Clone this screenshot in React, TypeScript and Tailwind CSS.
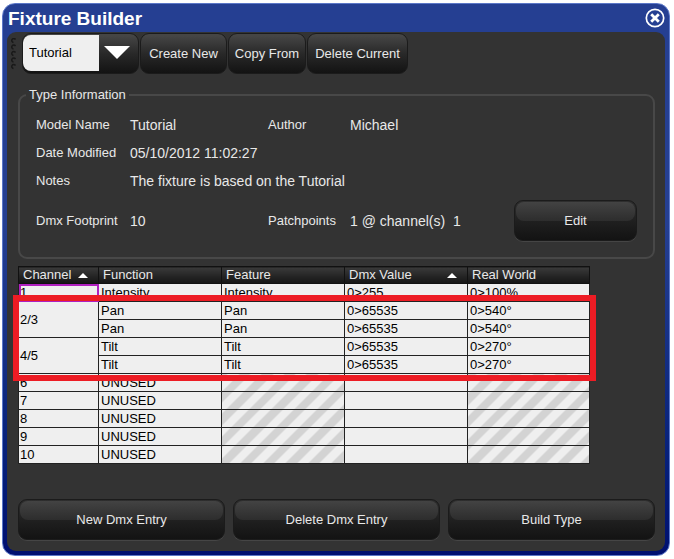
import { useState } from "react";
import clsx from "clsx";

type Entry = {
  channel?: string;
  span?: number;
  fn: string;
  feature?: string;
  dmx?: string;
  real?: string;
};

const entries: Entry[] = [
  { channel: "1", fn: "Intensity", feature: "Intensity", dmx: "0>255", real: "0>100%" },
  { channel: "2/3", span: 2, fn: "Pan", feature: "Pan", dmx: "0>65535", real: "0>540°" },
  { fn: "Pan", feature: "Pan", dmx: "0>65535", real: "0>540°" },
  { channel: "4/5", span: 2, fn: "Tilt", feature: "Tilt", dmx: "0>65535", real: "0>270°" },
  { fn: "Tilt", feature: "Tilt", dmx: "0>65535", real: "0>270°" },
  { channel: "6", fn: "UNUSED" },
  { channel: "7", fn: "UNUSED" },
  { channel: "8", fn: "UNUSED" },
  { channel: "9", fn: "UNUSED" },
  { channel: "10", fn: "UNUSED" },
];

const columns = [
  { label: "Channel", sorted: true, width: "w-[80px]" },
  { label: "Function", sorted: false, width: "w-[123px]" },
  { label: "Feature", sorted: false, width: "w-[123px]" },
  { label: "Dmx Value", sorted: true, width: "w-[123px]" },
  { label: "Real World", sorted: false, width: "w-[122px]" },
];

const buttonLook =
  "h-[41px] rounded-[9px] border border-[#1b1b1b] bg-linear-to-b from-[#454545] from-5% via-[#292929] via-50% to-[#131313] text-[#e8e8e8]";

function Button({ label, className }: { label: string; className?: string }) {
  return (
    <button type="button" className={clsx(buttonLook, "whitespace-nowrap", className)}>
      {label}
    </button>
  );
}

function BigButton({ label, className }: { label: string; className?: string }) {
  return (
    <button
      type="button"
      className={clsx(
        "relative h-[41px] rounded-[9px] border border-[#1b1b1b] bg-linear-to-b from-[#2e2e2e] to-[#131313] text-[#e8e8e8] shadow-[0_1px_0_#454545]",
        className,
      )}
    >
      {/* Glossy upper half */}
      <span className="absolute inset-x-px top-px h-[19px] rounded-[8px] bg-linear-to-b from-[#434343] to-[#2d2d2d]" />
      <span className="relative">{label}</span>
    </button>
  );
}

function Cell({ value, hatch }: { value?: string; hatch?: boolean }) {
  return (
    <td className={clsx("h-[18px] border border-[#222222] px-[2px] py-0", !hatch && "bg-[#efefef]")}>{value}</td>
  );
}

export default function App() {
  const [fixture, setFixture] = useState("Tutorial");

  return (
    <div className="min-h-screen bg-white pt-[3px] pr-[4px] pb-[3px] pl-[2px] font-['Liberation_Sans',Arial,sans-serif] text-[13px] leading-[16px] text-[#e8e8e8]">
      <div className="rounded-[13px] border border-[#5b77c8] bg-linear-to-b from-[#253f92] from-40% to-[#000f70] px-[4px] pb-[4px]">
        {/* Title bar */}
        <header className="flex h-[28px] items-center justify-between pl-px">
          <h1 className="pt-[2px] text-[19px] leading-[24px] font-bold text-white">Fixture Builder</h1>
          <button type="button" aria-label="Close" className="text-white">
            <svg width="20" height="20" viewBox="0 0 20 20" fill="none" stroke="currentColor">
              <circle cx="10" cy="10" r="8.7" strokeWidth="1.7" />
              <path d="M6.2 6.2l7.6 7.6M13.8 6.2l-7.6 7.6" strokeWidth="2.8" />
            </svg>
          </button>
        </header>

        <main className="rounded-[9px] bg-[#333333] pr-[10px] pb-[11px] pl-[11px]">
          {/* Toolbar */}
          <div className="flex items-center gap-px pt-px">
            <svg className="-ml-[7px] mr-[5px]" width="5" height="32" viewBox="0 0 5 32" fill="none" stroke="#191919" strokeWidth="1.5">
              <path d="M4.5 1.5a2 2 0 1 0-2 3M4.5 8a2 2 0 1 0-2 3M4.5 14.5a2 2 0 1 0-2 3M4.5 21a2 2 0 1 0-2 3M4.5 27.5a2 2 0 1 0-2 3" />
            </svg>
            <div className={clsx(buttonLook, "relative w-[117px] overflow-hidden pt-px")}>
              <select
                aria-label="Fixture type"
                value={fixture}
                onChange={(e) => setFixture(e.target.value)}
                className="block h-[36px] w-full appearance-none rounded-l-[8px] bg-[linear-gradient(to_right,#efefef_76px,transparent_76px)] pl-[6px] text-black outline-none"
              >
                <option>Tutorial</option>
              </select>
              <svg className="pointer-events-none absolute top-[12px] right-[8px]" width="26" height="13" viewBox="0 0 26 13" fill="#ffffff">
                <path d="M0 0h26L13 13z" />
              </svg>
            </div>
            <Button label="Create New" className="w-[87px]" />
            <Button label="Copy From" className="w-[78px]" />
            <Button label="Delete Current" className="w-[101px]" />
          </div>

          <fieldset className="mt-[13px] rounded-[9px] border-2 border-[#484848] px-[16px] pb-[16px]">
            <legend className="-ml-[10px] px-[3px]">Type Information</legend>
            <div className="flex items-end justify-between pt-[14px]">
              <dl className="grid grid-cols-[94px_138px_82px_auto] gap-y-[12px] [&_dd]:text-[14px] [&_dd]:leading-[16px]">
                <dt>Model Name</dt>
                <dd>Tutorial</dd>
                <dt>Author</dt>
                <dd>Michael</dd>
                <dt>Date Modified</dt>
                <dd className="col-span-3">05/10/2012 11:02:27</dd>
                <dt>Notes</dt>
                <dd className="col-span-3">The fixture is based on the Tutorial</dd>
                <dt className="py-[12px]">Dmx Footprint</dt>
                <dd className="py-[12px]">10</dd>
                <dt className="py-[12px]">Patchpoints</dt>
                <dd className="py-[12px] whitespace-pre">1 @ channel(s)  1</dd>
              </dl>
              <BigButton label="Edit" className="w-[123px]" />
            </div>
          </fieldset>

          {/* Channel table */}
          <div className="relative mt-[7px] w-[571px] max-w-full">
            <table className="w-full table-fixed border-collapse bg-[repeating-linear-gradient(135deg,#efefef_0px,#efefef_8px,#d3d3d3_8px,#d3d3d3_16px)] text-left text-black">
              <thead>
                <tr>
                  {columns.map((col) => (
                    <th
                      key={col.label}
                      className={clsx(
                        "h-[17px] border border-[#111111] bg-linear-to-b from-[#3a3a3a] to-[#151515] px-[4px] py-0 font-normal text-[#e8e8e8]",
                        col.width,
                      )}
                    >
                      <span className="flex items-center justify-between">
                        {col.label}
                        {col.sorted && (
                          <svg className="mr-[6px]" width="10" height="5" viewBox="0 0 10 5" fill="#ffffff">
                            <path d="M0 5h10L5 0z" />
                          </svg>
                        )}
                      </span>
                    </th>
                  ))}
                </tr>
              </thead>
              <tbody>
                {entries.map((entry, i) => {
                  const unused = entry.fn === "UNUSED";
                  return (
                    <tr key={i}>
                      {entry.channel && (
                        <td
                          rowSpan={entry.span}
                          className={clsx(
                            "h-[18px] border border-[#222222] bg-[#efefef] px-px py-0",
                            i === 0 && "outline-2 -outline-offset-2 outline-[#b020c0]",
                          )}
                        >
                          {entry.channel}
                        </td>
                      )}
                      <Cell value={entry.fn} />
                      <Cell value={entry.feature} hatch={unused} />
                      <Cell value={entry.dmx} />
                      <Cell value={entry.real} hatch={unused} />
                    </tr>
                  );
                })}
              </tbody>
            </table>
            {/* Highlight around the 16 bit channels */}
            <div className="pointer-events-none absolute top-[29px] -right-[7px] -left-[5px] h-[86px] border-6 border-[#ed1c24]" />
          </div>

          <div className="mt-[35px] flex gap-[8px]">
            <BigButton label="New Dmx Entry" className="flex-1" />
            <BigButton label="Delete Dmx Entry" className="flex-1" />
            <BigButton label="Build Type" className="flex-1" />
          </div>
        </main>
      </div>
    </div>
  );
}
